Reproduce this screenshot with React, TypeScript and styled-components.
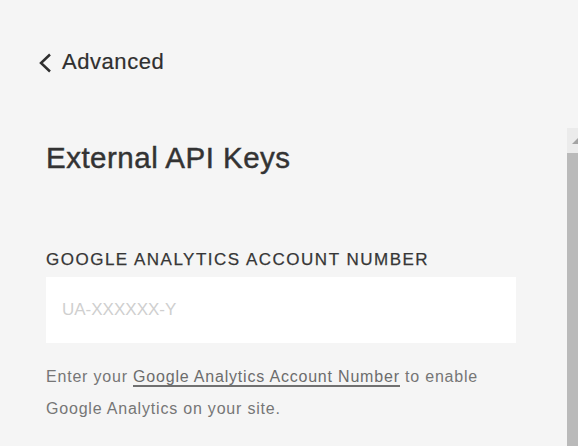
import styled, { createGlobalStyle } from 'styled-components'

const GlobalStyle = createGlobalStyle`
  html, body {
    margin: 0;
    padding: 0;
    background: #f5f5f5;
  }
  body {
    font-family: 'Liberation Sans', Arial, sans-serif;
  }
`

const Page = styled.div`
  display: flex;
  width: 578px;
  height: 446px;
  overflow: hidden;
  background: #f5f5f5;
`

const Main = styled.main`
  flex: 1;
  min-width: 0;
  padding: 50px 0 0 38px;
`

const BackLink = styled.a`
  display: flex;
  align-items: center;
  gap: 10px;
  color: #2f2f2f;
  font-size: 22px;
  line-height: 24px;
  letter-spacing: 0.55px;
  text-decoration: none;
  -webkit-text-stroke: 0.2px #2f2f2f;
  cursor: pointer;

  svg {
    display: block;
    margin-top: 1px;
  }
`

const Section = styled.section`
  width: 470px;
  padding: 66px 0 0 8px;
`

const Heading = styled.h1`
  margin: 0;
  color: #333;
  font-size: 29.5px;
  line-height: 36px;
  font-weight: normal;
  letter-spacing: 0.5px;
  -webkit-text-stroke: 0.45px #333;
`

const Field = styled.div`
  display: flex;
  flex-direction: column;
  gap: 7px;
  margin-top: 74px;
`

const Label = styled.label`
  color: #363636;
  font-size: 17px;
  line-height: 20px;
  letter-spacing: 1.5px;
  text-transform: uppercase;
  -webkit-text-stroke: 0.25px #363636;
`

const Input = styled.input`
  box-sizing: border-box;
  height: 66px;
  width: 100%;
  padding: 0 16px;
  border: none;
  outline: none;
  background: #fff;
  color: #333;
  font-family: inherit;
  font-size: 17px;

  &::placeholder {
    color: #cfcfcf;
    opacity: 1;
  }
`

const Help = styled.p`
  margin: 18px 0 0;
  color: #767676;
  font-size: 16px;
  line-height: 31.5px;
  letter-spacing: 0.8px;
`

const HelpLink = styled.a`
  color: #6c6c6c;
  text-decoration: none;
  border-bottom: 2px solid #707070;
  cursor: pointer;
`

const Scrollbar = styled.div`
  display: flex;
  flex-direction: column;
  width: 11px;
  margin-top: 128px;
`

const ScrollButton = styled.div`
  height: 25px;
  background: #ebebeb;

  svg {
    display: block;
  }
`

const ScrollThumb = styled.div`
  flex: 1;
  background: #bababa;
`

export default function App() {
  return (
    <Page>
      <GlobalStyle />
      <Main>
        <BackLink>
          <svg width="14" height="20" viewBox="0 0 14 20">
            <polyline
              points="12,1.5 3,10 12,18.5"
              fill="none"
              stroke="#2f2f2f"
              strokeWidth="2.5"
            />
          </svg>
          Advanced
        </BackLink>
        <Section>
          <Heading>External API Keys</Heading>
          <Field>
            <Label htmlFor="ga">Google Analytics Account Number</Label>
            <Input id="ga" placeholder="UA-XXXXXX-Y" />
          </Field>
          <Help>
            Enter your <HelpLink>Google Analytics Account Number</HelpLink> to
            enable Google Analytics on your site.
          </Help>
        </Section>
      </Main>
      <Scrollbar>
        <ScrollButton>
          <svg width="11" height="25" viewBox="0 0 11 25">
            <polygon points="5,16 11,10 11,16" fill="#a3a3a3" />
          </svg>
        </ScrollButton>
        <ScrollThumb />
      </Scrollbar>
    </Page>
  )
}
